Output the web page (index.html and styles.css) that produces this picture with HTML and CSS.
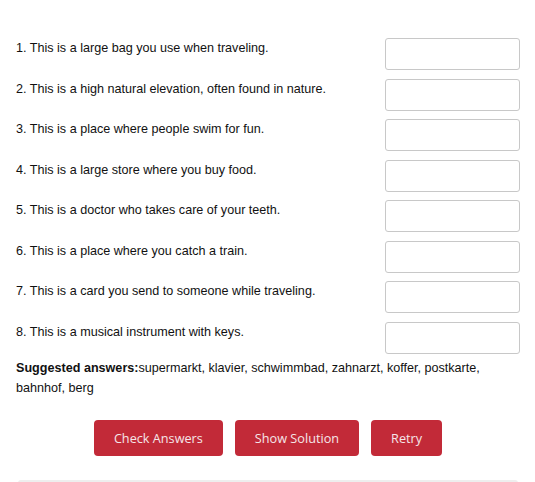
FILE: index.html
```html
<!DOCTYPE html>
<html>
<head>
<meta charset="utf-8">
<link rel="stylesheet" href="styles.css">
</head>
<body>
<div class="quiz">
  <div class="questions">
    <div class="row"><span class="q">1. This is a large bag you use when traveling.</span><input class="ans" type="text"></div>
    <div class="row"><span class="q">2. This is a high natural elevation, often found in nature.</span><input class="ans" type="text"></div>
    <div class="row"><span class="q">3. This is a place where people swim for fun.</span><input class="ans" type="text"></div>
    <div class="row"><span class="q">4. This is a large store where you buy food.</span><input class="ans" type="text"></div>
    <div class="row"><span class="q">5. This is a doctor who takes care of your teeth.</span><input class="ans" type="text"></div>
    <div class="row"><span class="q">6. This is a place where you catch a train.</span><input class="ans" type="text"></div>
    <div class="row"><span class="q">7. This is a card you send to someone while traveling.</span><input class="ans" type="text"></div>
    <div class="row"><span class="q">8. This is a musical instrument with keys.</span><input class="ans" type="text"></div>
  </div>
  <p class="suggest"><b>Suggested answers:</b>supermarkt, klavier, schwimmbad, zahnarzt, koffer, postkarte, bahnhof, berg</p>
  <div class="buttons">
    <button class="btn">Check Answers</button>
    <button class="btn">Show Solution</button>
    <button class="btn">Retry</button>
  </div>
  <div class="footer"></div>
</div>
</body>
</html>
```
FILE: styles.css
```css
html, body {
  margin: 0;
  padding: 0;
  background: #fff;
}
body {
  font-family: "Liberation Sans", Arial, sans-serif;
  font-size: 12.6px;
  color: #111;
}
.quiz {
  padding: 38px 15px 0 16px;
}
.questions {
  display: flex;
  flex-direction: column;
  gap: 8.57px;
}
.row {
  display: flex;
  align-items: flex-start;
  justify-content: space-between;
  height: 32px;
}
.q {
  line-height: 20px;
}
.ans {
  box-sizing: border-box;
  width: 135px;
  height: 32px;
  margin: 0;
  border: 1px solid #c8c8c8;
  border-radius: 3px;
  background: #fff;
}
.suggest {
  margin: 4px 0 0;
  line-height: 20px;
}
.suggest b {
  font-weight: bold;
}
.buttons {
  display: flex;
  justify-content: center;
  gap: 12px;
  margin-top: 22px;
}
.btn {
  height: 36px;
  padding: 0 20px;
  border: none;
  border-radius: 4px;
  background: #c22a38;
  color: #f5e6e8;
  font-family: "Source Sans Pro", "Open Sans", sans-serif;
  font-size: 12.7px;
}
.footer {
  margin: 24px 2px 0 2px;
  height: 8px;
  background: #eeeeee;
  border-radius: 3px 3px 0 0;
}
```
